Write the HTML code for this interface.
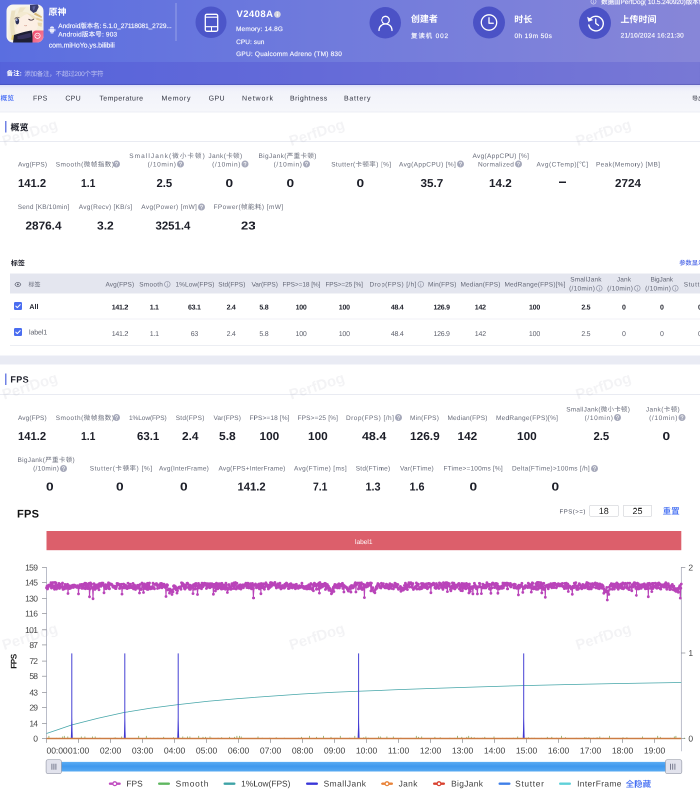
<!DOCTYPE html>
<html lang="en"><head><meta charset="utf-8"><title>PerfDog report</title>
<style>
html,body{margin:0;padding:0;background:#fff}
body{width:700px;height:795px;overflow:hidden;position:relative}
#r{position:absolute;left:0;top:0;width:1400px;height:1590px;transform:scale(.5);transform-origin:0 0;overflow:hidden;background:#fff;will-change:transform;text-rendering:geometricPrecision;
font-family:"Liberation Sans","Noto Sans CJK SC",sans-serif;}
.ab,#r>div{position:absolute;white-space:nowrap}
.md{font-weight:500}
</style></head><body>
<div id="r">
<div class="ab" style="left:0;top:0;width:1400px;height:125px;background:linear-gradient(90deg,#5a6ee0 0%,#6f7adc 45%,#8786d8 100%)"></div>
<div class="ab" style="left:0;top:124px;width:1400px;height:46px;background:linear-gradient(90deg,#5563db 0%,#646ad8 45%,#7878d5 100%);box-shadow:inset 0 -2px 1px rgba(40,44,130,.28)"></div>
<svg class="ab" style="left:13px;top:9px;width:74px;height:76px" viewBox="0 0 74 76">
<defs><clipPath id="ic"><rect x="0" y="0" width="74" height="76" rx="13"/></clipPath>
<linearGradient id="bg1" x1="0" y1="0" x2="1" y2="1"><stop offset="0" stop-color="#f0486a"/><stop offset="1" stop-color="#f58aa6"/></linearGradient></defs>
<g clip-path="url(#ic)">
<rect width="74" height="76" fill="#f8f5ee"/>
<path d="M4 70C2 40 6 14 24 6c14-5 30-2 40 8 8 8 10 24 8 40l-10 6-40 12z" fill="#f5efdc"/>
<path d="M10 12c-4 18-4 40 2 60l8-6c-6-18-6-36-2-54z" fill="#ebe1c2"/>
<path d="M27 6c-5 10-6 20-4 30 3-12 8-22 16-30z" fill="#ede3c6"/>
<path d="M17 30c2-8 10-13 22-13 12 0 22 6 24 16 2 12-4 22-14 26-8 3-18 3-25-2-6-5-9-16-7-27z" fill="#fcefe4"/>
<path d="M16 24c6-10 20-12 32-6-10 1-18 5-24 14-3 5-4 10-4 16-5-7-7-16-4-24z" fill="#f3ead0"/>
<path d="M40 18c8 0 16 4 20 10l-6 2c-4-5-8-9-14-12z" fill="#efe2bf"/>
<ellipse cx="21.6" cy="33.5" rx="3.7" ry="6.3" fill="#2a2f58"/>
<ellipse cx="20.5" cy="31" rx="1.5" ry="2.2" fill="#aab4e6"/>
<path d="M16.5 29c2-3.5 6-4.5 9-2.5" stroke="#4a3f48" stroke-width="1.3" fill="none" stroke-linecap="round"/>
<path d="M44.5 29.5c3 2.4 7 2.4 10-.3" stroke="#4a3a40" stroke-width="1.7" fill="none" stroke-linecap="round"/>
<path d="M36 42c1.5 1 3 1 4.5 0" stroke="#c78a7a" stroke-width="1.1" fill="none" stroke-linecap="round"/>
<path d="M47 1l15.5-1 2 5-4.5 9-6 3-7-6z" fill="#3b3d6a"/>
<path d="M52 4l6-1-2 7-3 2z" fill="#5a5f98"/>
<path d="M57 16l14 8-1 3-15-7z" fill="#d8b978"/><path d="M60 26l12 4v4l-13-4z" fill="#e6cf9c"/><path d="M62 36l9 1-1 8-7-3z" fill="#ead9ae"/>
<path d="M11 62c4-2 8-1 10 2l-4 8-8-2z" fill="#e9d47c"/>
<path d="M15 61c10-3 24-8 36-9l2 24H13z" fill="#1f1f33"/>
<path d="M22 63c8-1 18-5 26-6l1 8c-8 3-18 5-27 4z" fill="#35305a"/>
<path d="M52 59a7 7 0 0 1 7-7h15v24H52z" fill="url(#bg1)"/>
<circle cx="62" cy="62.5" r="5.3" fill="none" stroke="#fff" stroke-width="1.5"/>
<path d="M59.7 62.3h1.4M62.9 62.3h1.4" stroke="#fff" stroke-width="1.3" stroke-linecap="round"/>
</g></svg>
<div style="left:97.1px;top:13.3px;font-size:18px;line-height:23px;color:#fff;font-weight:bold;--cs:30;">原神</div>
<svg class="ab" style="left:97px;top:52px;width:14px;height:16px" viewBox="0 0 14 16">
<path d="M3 5.2h8v6.3a1 1 0 0 1-1 1H4a1 1 0 0 1-1-1z" fill="#e8eafb"/>
<path d="M3 4.4a4 3.6 0 0 1 8 0z" fill="#e8eafb"/>
<rect x="0.3" y="5.4" width="2" height="5.4" rx="1" fill="#e8eafb"/><rect x="11.7" y="5.4" width="2" height="5.4" rx="1" fill="#e8eafb"/>
<rect x="4.4" y="11.5" width="2" height="4" rx="1" fill="#e8eafb"/><rect x="7.6" y="11.5" width="2" height="4" rx="1" fill="#e8eafb"/>
</svg>
<div style="left:116.6px;top:43.3px;font-size:13px;line-height:17px;color:rgba(255,255,255,.92);letter-spacing:-0.13px;-webkit-text-stroke:.35px rgba(255,255,255,.85);--cs:22;">Android版本名: 5.1.0_27118081_2729...</div>
<div style="left:116.6px;top:60.3px;font-size:13px;line-height:17px;color:rgba(255,255,255,.92);letter-spacing:0.35px;-webkit-text-stroke:.35px rgba(255,255,255,.85);--cs:22;">Android版本号: 903</div>
<div style="left:97.4px;top:80.8px;font-size:14px;line-height:18px;color:rgba(255,255,255,.92);letter-spacing:-0.12px;-webkit-text-stroke:.35px rgba(255,255,255,.85);--cs:22;">com.miHoYo.ys.bilibili</div>
<div class="ab" style="left:351px;top:6px;width:2px;height:76px;background:rgba(255,255,255,.32)"></div>
<div class="ab" style="left:390.8px;top:13.4px;width:62.4px;height:62.4px;border-radius:50%;background:#4c56c9"></div>
<svg class="ab" style="left:408px;top:26px;width:30px;height:40px" viewBox="0 0 30 40">
<rect x="2.6" y="2.6" width="24.8" height="34" rx="3.2" fill="none" stroke="#fff" stroke-width="2.6"/>
<path d="M3 8.4h24M3 27.4h24" stroke="#fff" stroke-width="2.3"/>
<path d="M15 28v8" stroke="#fff" stroke-width="2"/></svg>
<div style="left:472.9px;top:15.7px;font-size:19px;line-height:25px;color:#fff;font-weight:bold;letter-spacing:0.87px;">V2408A</div>
<svg class="ab" style="left:548px;top:22px;width:13.5px;height:13.5px" viewBox="0 0 20 20"><circle cx="10" cy="10" r="10" fill="#d0d0e0"/>
<path d="M10 9v6" stroke="#fff" stroke-width="2.4" stroke-linecap="round"/><circle cx="10" cy="5.3" r="1.5" fill="#fff"/></svg>
<div style="left:471.9px;top:49.1px;font-size:13px;line-height:17px;color:rgba(255,255,255,.92);letter-spacing:0.37px;-webkit-text-stroke:.35px rgba(255,255,255,.85);--cs:22;">Memory: 14.8G</div>
<div style="left:472.3px;top:74.5px;font-size:13px;line-height:17px;color:rgba(255,255,255,.92);letter-spacing:0.12px;-webkit-text-stroke:.35px rgba(255,255,255,.85);--cs:22;">CPU: sun</div>
<div style="left:472.3px;top:98.9px;font-size:13px;line-height:17px;color:rgba(255,255,255,.92);letter-spacing:0.43px;-webkit-text-stroke:.35px rgba(255,255,255,.85);--cs:22;">GPU: Qualcomm Adreno (TM) 830</div>
<div class="ab" style="left:738.8px;top:13.6px;width:63.6px;height:63.6px;border-radius:50%;background:#4b52c6"></div>
<svg class="ab" style="left:754px;top:28px;width:34px;height:36px" viewBox="0 0 34 36">
<circle cx="17" cy="12.2" r="7.6" fill="none" stroke="#fff" stroke-width="2.6"/>
<path d="M4 33c0-8 5.5-13 13-13s13 5 13 13" fill="none" stroke="#fff" stroke-width="2.6" stroke-linecap="round"/></svg>
<div style="left:821.7px;top:27.3px;font-size:18px;line-height:23px;color:#fff;font-weight:bold;--cs:30;">创建者</div>
<div style="left:822px;top:62.7px;font-size:13px;line-height:17px;color:rgba(255,255,255,.92);letter-spacing:1.67px;-webkit-text-stroke:.35px rgba(255,255,255,.85);--cs:22;">复读机 002</div>
<div class="ab" style="left:945.8px;top:13px;width:64.4px;height:64.4px;border-radius:50%;background:#4b52c6"></div>
<svg class="ab" style="left:960px;top:27px;width:36px;height:36px" viewBox="0 0 36 36">
<circle cx="18" cy="18" r="15.4" fill="none" stroke="#fff" stroke-width="2.6"/>
<path d="M18 8.5v11h8.5" fill="none" stroke="#fff" stroke-width="2.6" stroke-linecap="round" stroke-linejoin="round"/></svg>
<div style="left:1028.5px;top:27.5px;font-size:18px;line-height:23px;color:#fff;font-weight:bold;--cs:30;">时长</div>
<div style="left:1028.9px;top:62.7px;font-size:13px;line-height:17px;color:rgba(255,255,255,.92);letter-spacing:0.78px;-webkit-text-stroke:.35px rgba(255,255,255,.85);--cs:22;">0h 19m 50s</div>
<div class="ab" style="left:1157.8px;top:14px;width:64.4px;height:64.4px;border-radius:50%;background:#4b52c6"></div>
<svg class="ab" style="left:1172px;top:28px;width:38px;height:36px" viewBox="0 0 38 36">
<path d="M7.5 11.5A14.6 14.6 0 1 1 5.6 22" fill="none" stroke="#fff" stroke-width="2.8" stroke-linecap="round"/>
<path d="M2.2 5.5l2.6 10 9.6-3.4z" fill="#fff"/>
<path d="M19.5 10v8.6l5.6 4.2" fill="none" stroke="#fff" stroke-width="2.6" stroke-linecap="round" stroke-linejoin="round"/></svg>
<div style="left:1241.1px;top:27.9px;font-size:18px;line-height:23px;color:#fff;font-weight:bold;--cs:30;">上传时间</div>
<div style="left:1241.3px;top:62.3px;font-size:13px;line-height:17px;color:rgba(255,255,255,.92);letter-spacing:0.39px;-webkit-text-stroke:.35px rgba(255,255,255,.85);--cs:22;">21/10/2024 16:21:30</div>
<svg class="ab" style="left:1181px;top:-3px;width:12px;height:12px" viewBox="0 0 20 20"><circle cx="10" cy="10" r="8.6" fill="none" stroke="rgba(255,255,255,.85)" stroke-width="1.8"/><path d="M10 9v5.5" stroke="rgba(255,255,255,.85)" stroke-width="2"/><circle cx="10" cy="5.8" r="1.2" fill="rgba(255,255,255,.85)"/></svg>
<div style="left:1202.3px;top:-5.1px;font-size:13px;line-height:17px;color:rgba(255,255,255,.92);letter-spacing:-0.09px;-webkit-text-stroke:.35px rgba(255,255,255,.85);--cs:22;">数据由PerfDog( 10.5.240920)版本创建</div>
<div style="left:13.3px;top:138.1px;font-size:13px;line-height:17px;color:#fff;font-weight:bold;">备注:</div>
<div style="left:48.4px;top:138.5px;font-size:13px;line-height:17px;color:rgba(255,255,255,.6);letter-spacing:-0.46px;">添加备注，不超过200个字符</div>
<div class="ab" style="left:0;top:170px;width:1400px;height:54px;background:linear-gradient(180deg,#dcdff8 0,#ecedfa 6px,#f2f3fa 14px,#f6f7fb 100%)"></div>
<div class="ab" style="left:0;top:223px;width:1400px;height:2px;background:#eceef5"></div>
<div style="left:1.1px;top:188px;font-size:13.5px;line-height:18px;color:#4068f5;"><span class="md">概览</span></div>
<div style="left:66.1px;top:187.4px;font-size:14px;line-height:18px;color:#30323f;letter-spacing:0.68px;">FPS</div>
<div style="left:130.7px;top:187.4px;font-size:14px;line-height:18px;color:#30323f;letter-spacing:0.52px;">CPU</div>
<div style="left:198.7px;top:187.4px;font-size:14px;line-height:18px;color:#30323f;letter-spacing:0.88px;">Temperature</div>
<div style="left:322.9px;top:187.4px;font-size:14px;line-height:18px;color:#30323f;letter-spacing:1.52px;">Memory</div>
<div style="left:417.3px;top:187.4px;font-size:14px;line-height:18px;color:#30323f;letter-spacing:0.72px;">GPU</div>
<div style="left:483.9px;top:187.4px;font-size:14px;line-height:18px;color:#30323f;letter-spacing:1.8px;">Network</div>
<div style="left:579.9px;top:187.4px;font-size:14px;line-height:18px;color:#30323f;letter-spacing:0.95px;">Brightness</div>
<div style="left:687.9px;top:187.4px;font-size:14px;line-height:18px;color:#30323f;letter-spacing:1.47px;">Battery</div>
<div style="left:1384px;top:189.2px;font-size:12px;line-height:16px;color:#30323f;">导出</div>
<div class="ab" style="left:0;top:711px;width:1400px;height:18px;background:#e9ebf4"></div>
<div class="ab" style="left:9.6px;top:241.8px;width:3.4px;height:23px;background:#7182e4"></div>
<div style="left:21.1px;top:243.7px;font-size:18px;line-height:23px;color:#1d1f2a;font-weight:bold;">概览</div>
<div class="ab" style="left:0;top:282.2px;width:1400px;height:2px;background:#e9ebf2"></div>
<div class="ab" style="left:9.6px;top:747.4px;width:3.4px;height:23px;background:#7182e4"></div>
<div style="left:20.8px;top:748.1px;font-size:18px;line-height:23px;color:#1d1f2a;font-weight:bold;letter-spacing:0.75px;">FPS</div>
<div class="ab" style="left:0;top:787.8px;width:1400px;height:2px;background:#e9ebf2"></div>
<div class="ab" style="left:10px;top:268px;font-size:29.5px;line-height:30px;font-weight:bold;color:rgba(150,152,165,.115);transform:rotate(-18deg);transform-origin:0 100%">PerfDog</div>
<div class="ab" style="left:584px;top:268px;font-size:29.5px;line-height:30px;font-weight:bold;color:rgba(150,152,165,.115);transform:rotate(-18deg);transform-origin:0 100%">PerfDog</div>
<div class="ab" style="left:1157px;top:268px;font-size:29.5px;line-height:30px;font-weight:bold;color:rgba(150,152,165,.115);transform:rotate(-18deg);transform-origin:0 100%">PerfDog</div>
<div class="ab" style="left:10px;top:775px;font-size:29.5px;line-height:30px;font-weight:bold;color:rgba(150,152,165,.115);transform:rotate(-18deg);transform-origin:0 100%">PerfDog</div>
<div class="ab" style="left:584px;top:775px;font-size:29.5px;line-height:30px;font-weight:bold;color:rgba(150,152,165,.115);transform:rotate(-18deg);transform-origin:0 100%">PerfDog</div>
<div class="ab" style="left:1157px;top:775px;font-size:29.5px;line-height:30px;font-weight:bold;color:rgba(150,152,165,.115);transform:rotate(-18deg);transform-origin:0 100%">PerfDog</div>
<div class="ab" style="left:10px;top:1276px;font-size:29.5px;line-height:30px;font-weight:bold;color:rgba(150,152,165,.115);transform:rotate(-18deg);transform-origin:0 100%">PerfDog</div>
<div class="ab" style="left:584px;top:1276px;font-size:29.5px;line-height:30px;font-weight:bold;color:rgba(150,152,165,.115);transform:rotate(-18deg);transform-origin:0 100%">PerfDog</div>
<div class="ab" style="left:1157px;top:1276px;font-size:29.5px;line-height:30px;font-weight:bold;color:rgba(150,152,165,.115);transform:rotate(-18deg);transform-origin:0 100%">PerfDog</div>
<div style="left:36px;top:319.7px;font-size:13px;line-height:17px;color:#696d7b;letter-spacing:0.27px;">Avg(FPS)</div>
<div style="left:36.2px;top:350.6px;font-size:23px;line-height:30px;color:#1c1e28;font-weight:bold;transform:scaleX(0.978);transform-origin:0 50%;">141.2</div>
<div style="left:111.4px;top:319.7px;font-size:13px;line-height:17px;color:#696d7b;letter-spacing:0.99px;">Smooth(微帧指数)</div>
<svg class="ab" style="left:226.4px;top:321.4px;width:14px;height:14px" viewBox="0 0 20 20"><circle cx="10" cy="10" r="10" fill="#a6a9ba"/><path d="M7 7.8C7 5.9 8.3 4.9 10 4.9s3 1 3 2.6c0 2.3-2.9 2.4-2.9 4.6" fill="none" stroke="#fff" stroke-width="1.9" stroke-linecap="round"/><circle cx="10.1" cy="15" r="1.25" fill="#fff"/></svg>
<div style="left:161.6px;top:350.6px;font-size:23px;line-height:30px;color:#1c1e28;font-weight:bold;transform:scaleX(0.9);transform-origin:0 50%;">1.1</div>
<div style="left:258.4px;top:302.9px;font-size:13px;line-height:17px;color:#696d7b;letter-spacing:2.18px;">SmallJank(微小卡顿)</div>
<div style="left:295.2px;top:319.7px;font-size:13px;line-height:17px;color:#696d7b;letter-spacing:1.28px;">(/10min)</div>
<svg class="ab" style="left:354.4px;top:321.4px;width:14px;height:14px" viewBox="0 0 20 20"><circle cx="10" cy="10" r="10" fill="#a6a9ba"/><path d="M7 7.8C7 5.9 8.3 4.9 10 4.9s3 1 3 2.6c0 2.3-2.9 2.4-2.9 4.6" fill="none" stroke="#fff" stroke-width="1.9" stroke-linecap="round"/><circle cx="10.1" cy="15" r="1.25" fill="#fff"/></svg>
<div style="left:313.4px;top:350.6px;font-size:23px;line-height:30px;color:#1c1e28;font-weight:bold;transform:scaleX(0.982);transform-origin:0 50%;">2.5</div>
<div style="left:416.8px;top:302.9px;font-size:13px;line-height:17px;color:#696d7b;letter-spacing:0.78px;">Jank(卡顿)</div>
<div style="left:424.2px;top:319.7px;font-size:13px;line-height:17px;color:#696d7b;letter-spacing:1.28px;">(/10min)</div>
<svg class="ab" style="left:483.4px;top:321.4px;width:14px;height:14px" viewBox="0 0 20 20"><circle cx="10" cy="10" r="10" fill="#a6a9ba"/><path d="M7 7.8C7 5.9 8.3 4.9 10 4.9s3 1 3 2.6c0 2.3-2.9 2.4-2.9 4.6" fill="none" stroke="#fff" stroke-width="1.9" stroke-linecap="round"/><circle cx="10.1" cy="15" r="1.25" fill="#fff"/></svg>
<div style="left:450.8px;top:350.6px;font-size:23px;line-height:30px;color:#1c1e28;font-weight:bold;transform:scaleX(1.188);transform-origin:0 50%;">0</div>
<div style="left:516.9px;top:302.9px;font-size:13px;line-height:17px;color:#696d7b;letter-spacing:0.75px;">BigJank(严重卡顿)</div>
<div style="left:547.2px;top:319.7px;font-size:13px;line-height:17px;color:#696d7b;letter-spacing:1.28px;">(/10min)</div>
<svg class="ab" style="left:606.4px;top:321.4px;width:14px;height:14px" viewBox="0 0 20 20"><circle cx="10" cy="10" r="10" fill="#a6a9ba"/><path d="M7 7.8C7 5.9 8.3 4.9 10 4.9s3 1 3 2.6c0 2.3-2.9 2.4-2.9 4.6" fill="none" stroke="#fff" stroke-width="1.9" stroke-linecap="round"/><circle cx="10.1" cy="15" r="1.25" fill="#fff"/></svg>
<div style="left:573.4px;top:350.6px;font-size:23px;line-height:30px;color:#1c1e28;font-weight:bold;transform:scaleX(1.188);transform-origin:0 50%;">0</div>
<div style="left:662.4px;top:319.7px;font-size:13px;line-height:17px;color:#696d7b;letter-spacing:0.76px;">Stutter(卡顿率) [%]</div>
<div style="left:713.4px;top:350.6px;font-size:23px;line-height:30px;color:#1c1e28;font-weight:bold;transform:scaleX(1.188);transform-origin:0 50%;">0</div>
<div style="left:798px;top:319.7px;font-size:13px;line-height:17px;color:#696d7b;letter-spacing:0.71px;">Avg(AppCPU) [%]</div>
<svg class="ab" style="left:914.4px;top:321.4px;width:14px;height:14px" viewBox="0 0 20 20"><circle cx="10" cy="10" r="10" fill="#a6a9ba"/><path d="M7 7.8C7 5.9 8.3 4.9 10 4.9s3 1 3 2.6c0 2.3-2.9 2.4-2.9 4.6" fill="none" stroke="#fff" stroke-width="1.9" stroke-linecap="round"/><circle cx="10.1" cy="15" r="1.25" fill="#fff"/></svg>
<div style="left:840.5px;top:350.6px;font-size:23px;line-height:30px;color:#1c1e28;font-weight:bold;transform:scaleX(1.018);transform-origin:0 50%;">35.7</div>
<div style="left:945px;top:302.9px;font-size:13px;line-height:17px;color:#696d7b;letter-spacing:0.64px;">Avg(AppCPU) [%]</div>
<div style="left:955.9px;top:319.7px;font-size:13px;line-height:17px;color:#696d7b;letter-spacing:0.68px;">Normalized</div>
<svg class="ab" style="left:1030.4px;top:321.4px;width:14px;height:14px" viewBox="0 0 20 20"><circle cx="10" cy="10" r="10" fill="#a6a9ba"/><path d="M7 7.8C7 5.9 8.3 4.9 10 4.9s3 1 3 2.6c0 2.3-2.9 2.4-2.9 4.6" fill="none" stroke="#fff" stroke-width="1.9" stroke-linecap="round"/><circle cx="10.1" cy="15" r="1.25" fill="#fff"/></svg>
<div style="left:977.6px;top:350.6px;font-size:23px;line-height:30px;color:#1c1e28;font-weight:bold;transform:scaleX(1.014);transform-origin:0 50%;">14.2</div>
<div style="left:1073px;top:319.7px;font-size:13px;line-height:17px;color:#696d7b;letter-spacing:0.91px;">Avg(CTemp)[℃]</div>
<div class="ab" style="left:1118px;top:363px;width:14px;height:3.4px;background:#1c1e28"></div>
<div style="left:1191.9px;top:319.7px;font-size:13px;line-height:17px;color:#696d7b;letter-spacing:0.78px;">Peak(Memory) [MB]</div>
<div style="left:1229.7px;top:350.6px;font-size:23px;line-height:30px;color:#1c1e28;font-weight:bold;transform:scaleX(1.015);transform-origin:0 50%;">2724</div>
<div style="left:35.4px;top:405.1px;font-size:13px;line-height:17px;color:#696d7b;letter-spacing:0.4px;">Send [KB/10min]</div>
<div style="left:50.7px;top:436px;font-size:23px;line-height:30px;color:#1c1e28;font-weight:bold;transform:scaleX(1.023);transform-origin:0 50%;">2876.4</div>
<div style="left:157.6px;top:405.1px;font-size:13px;line-height:17px;color:#696d7b;letter-spacing:0.53px;">Avg(Recv) [KB/s]</div>
<div style="left:193.8px;top:436px;font-size:23px;line-height:30px;color:#1c1e28;font-weight:bold;transform:scaleX(1.048);transform-origin:0 50%;">3.2</div>
<div style="left:282.6px;top:405.1px;font-size:13px;line-height:17px;color:#696d7b;letter-spacing:0.68px;">Avg(Power) [mW]</div>
<svg class="ab" style="left:396.4px;top:406.8px;width:14px;height:14px" viewBox="0 0 20 20"><circle cx="10" cy="10" r="10" fill="#a6a9ba"/><path d="M7 7.8C7 5.9 8.3 4.9 10 4.9s3 1 3 2.6c0 2.3-2.9 2.4-2.9 4.6" fill="none" stroke="#fff" stroke-width="1.9" stroke-linecap="round"/><circle cx="10.1" cy="15" r="1.25" fill="#fff"/></svg>
<div style="left:311.4px;top:436px;font-size:23px;line-height:30px;color:#1c1e28;font-weight:bold;transform:scaleX(0.99);transform-origin:0 50%;">3251.4</div>
<div style="left:426.9px;top:405.1px;font-size:13px;line-height:17px;color:#696d7b;letter-spacing:0.88px;">FPower(帧能耗) [mW]</div>
<div style="left:481.6px;top:436px;font-size:23px;line-height:30px;color:#1c1e28;font-weight:bold;transform:scaleX(1.127);transform-origin:0 50%;">23</div>
<div style="left:21.7px;top:517.4px;font-size:14px;line-height:18px;color:#1d1f2a;font-weight:bold;">标签</div>
<div style="left:1358.4px;top:518.2px;font-size:12.6px;line-height:16px;color:#4863e6;"><span class="md">参数显示</span></div>
<div class="ab" style="left:20px;top:547px;width:1380px;height:40px;background:#e4e6ef"></div>
<div class="ab" style="left:20px;top:637px;width:1380px;height:2px;background:#f0f1f6"></div>
<div class="ab" style="left:20px;top:690px;width:1380px;height:2px;background:#eceef3"></div>
<svg class="ab" style="left:29px;top:563px;width:13.5px;height:11.8px" viewBox="0 0 16 14"><path d="M1 7C2.8 3.6 5.2 2 8 2s5.2 1.6 7 5c-1.8 3.4-4.2 5-7 5S2.8 10.4 1 7z" fill="none" stroke="#5a5e6e" stroke-width="1.5"/><circle cx="8" cy="7" r="2.2" fill="#5a5e6e"/></svg>
<div style="left:57px;top:560.8px;font-size:12px;line-height:16px;color:#646877;">标签</div>
<svg class="ab" style="left:28.4px;top:604.4px;width:16px;height:16px" viewBox="0 0 16 16"><rect width="16" height="16" rx="2.5" fill="#4a6df0"/><path d="M3.6 8.2l3 3 5.8-6" fill="none" stroke="#fff" stroke-width="2" stroke-linecap="round" stroke-linejoin="round"/></svg>
<svg class="ab" style="left:28.4px;top:656px;width:16px;height:16px" viewBox="0 0 16 16"><rect width="16" height="16" rx="2.5" fill="#4a6df0"/><path d="M3.6 8.2l3 3 5.8-6" fill="none" stroke="#fff" stroke-width="2" stroke-linecap="round" stroke-linejoin="round"/></svg>
<div style="left:58.7px;top:604.2px;font-size:14px;line-height:18px;color:#22242e;font-weight:bold;letter-spacing:0.13px;">All</div>
<div style="left:58.1px;top:655.2px;font-size:14px;line-height:18px;color:#5d606c;letter-spacing:-0.23px;">label1</div>
<div style="left:211px;top:559.9px;font-size:13px;line-height:17px;color:#646877;letter-spacing:0.16px;">Avg(FPS)</div>
<div style="left:223.4px;top:604.8px;font-size:14px;line-height:18px;color:#22242e;font-weight:bold;letter-spacing:-0.53px;">141.2</div>
<div style="left:223.4px;top:657.8px;font-size:14px;line-height:18px;color:#5d606c;letter-spacing:-0.53px;">141.2</div>
<div style="left:278.4px;top:559.9px;font-size:13px;line-height:17px;color:#646877;letter-spacing:0.53px;">Smooth</div>
<svg class="ab" style="left:327.6px;top:562px;width:13.2px;height:13.2px" viewBox="0 0 20 20"><circle cx="10" cy="10" r="8.6" fill="none" stroke="#8d91a3" stroke-width="2"/><path d="M10 9v5.5" stroke="#8d91a3" stroke-width="1.8" stroke-linecap="round"/><circle cx="10" cy="5.8" r="1.2" fill="#8d91a3"/></svg>
<div style="left:299.5px;top:604.8px;font-size:14px;line-height:18px;color:#22242e;font-weight:bold;letter-spacing:-0.53px;">1.1</div>
<div style="left:299.6px;top:657.8px;font-size:14px;line-height:18px;color:#5d606c;letter-spacing:-0.53px;">1.1</div>
<div style="left:351px;top:559.9px;font-size:13px;line-height:17px;color:#646877;letter-spacing:0.14px;">1%Low(FPS)</div>
<div style="left:376.1px;top:604.8px;font-size:14px;line-height:18px;color:#22242e;font-weight:bold;letter-spacing:-0.53px;">63.1</div>
<div style="left:381.4px;top:657.8px;font-size:14px;line-height:18px;color:#5d606c;letter-spacing:-0.53px;">63</div>
<div style="left:436.4px;top:559.9px;font-size:13px;line-height:17px;color:#646877;letter-spacing:0.13px;">Std(FPS)</div>
<div style="left:453.2px;top:604.8px;font-size:14px;line-height:18px;color:#22242e;font-weight:bold;letter-spacing:-0.53px;">2.4</div>
<div style="left:453.2px;top:657.8px;font-size:14px;line-height:18px;color:#5d606c;letter-spacing:-0.53px;">2.4</div>
<div style="left:502.9px;top:559.9px;font-size:13px;line-height:17px;color:#646877;letter-spacing:-0.04px;">Var(FPS)</div>
<div style="left:518.8px;top:604.8px;font-size:14px;line-height:18px;color:#22242e;font-weight:bold;letter-spacing:-0.53px;">5.8</div>
<div style="left:518.8px;top:657.8px;font-size:14px;line-height:18px;color:#5d606c;letter-spacing:-0.53px;">5.8</div>
<div style="left:564.9px;top:559.9px;font-size:13px;line-height:17px;color:#646877;letter-spacing:-0.13px;">FPS&gt;=18 [%]</div>
<div style="left:591.2px;top:604.8px;font-size:14px;line-height:18px;color:#22242e;font-weight:bold;letter-spacing:-0.45px;">100</div>
<div style="left:591px;top:657.8px;font-size:14px;line-height:18px;color:#5d606c;letter-spacing:-0.37px;">100</div>
<div style="left:650.9px;top:559.9px;font-size:13px;line-height:17px;color:#646877;letter-spacing:-0.23px;">FPS&gt;=25 [%]</div>
<div style="left:677.6px;top:604.8px;font-size:14px;line-height:18px;color:#22242e;font-weight:bold;letter-spacing:-0.45px;">100</div>
<div style="left:677.4px;top:657.8px;font-size:14px;line-height:18px;color:#5d606c;letter-spacing:-0.37px;">100</div>
<div style="left:738.9px;top:559.9px;font-size:13px;line-height:17px;color:#646877;letter-spacing:0.78px;">Drop(FPS) [/h]</div>
<svg class="ab" style="left:834.6px;top:562px;width:13.2px;height:13.2px" viewBox="0 0 20 20"><circle cx="10" cy="10" r="8.6" fill="none" stroke="#8d91a3" stroke-width="2"/><path d="M10 9v5.5" stroke="#8d91a3" stroke-width="1.8" stroke-linecap="round"/><circle cx="10" cy="5.8" r="1.2" fill="#8d91a3"/></svg>
<div style="left:781.7px;top:604.8px;font-size:14px;line-height:18px;color:#22242e;font-weight:bold;letter-spacing:-0.53px;">48.4</div>
<div style="left:781.8px;top:657.8px;font-size:14px;line-height:18px;color:#5d606c;letter-spacing:-0.51px;">48.4</div>
<div style="left:855.9px;top:559.9px;font-size:13px;line-height:17px;color:#646877;letter-spacing:0.28px;">Min(FPS)</div>
<div style="left:867px;top:604.8px;font-size:14px;line-height:18px;color:#22242e;font-weight:bold;letter-spacing:-0.53px;">126.9</div>
<div style="left:866.9px;top:657.8px;font-size:14px;line-height:18px;color:#5d606c;letter-spacing:-0.53px;">126.9</div>
<div style="left:920.9px;top:559.9px;font-size:13px;line-height:17px;color:#646877;letter-spacing:0.33px;">Median(FPS)</div>
<div style="left:949.6px;top:604.8px;font-size:14px;line-height:18px;color:#22242e;font-weight:bold;letter-spacing:-0.46px;">142</div>
<div style="left:949.4px;top:657.8px;font-size:14px;line-height:18px;color:#5d606c;letter-spacing:-0.29px;">142</div>
<div style="left:1008.9px;top:559.9px;font-size:13px;line-height:17px;color:#646877;letter-spacing:0.38px;">MedRange(FPS)[%]</div>
<div style="left:1058px;top:604.8px;font-size:14px;line-height:18px;color:#22242e;font-weight:bold;letter-spacing:-0.45px;">100</div>
<div style="left:1057.8px;top:657.8px;font-size:14px;line-height:18px;color:#5d606c;letter-spacing:-0.37px;">100</div>
<div style="left:1140.4px;top:549.9px;font-size:13px;line-height:17px;color:#646877;letter-spacing:0.33px;">SmallJank</div>
<div style="left:1138.2px;top:567.5px;font-size:13px;line-height:17px;color:#646877;letter-spacing:0.56px;">(/10min)</div>
<svg class="ab" style="left:1191.6px;top:569.6px;width:13.2px;height:13.2px" viewBox="0 0 20 20"><circle cx="10" cy="10" r="8.6" fill="none" stroke="#8d91a3" stroke-width="2"/><path d="M10 9v5.5" stroke="#8d91a3" stroke-width="1.8" stroke-linecap="round"/><circle cx="10" cy="5.8" r="1.2" fill="#8d91a3"/></svg>
<div style="left:1162.7px;top:604.8px;font-size:14px;line-height:18px;color:#22242e;font-weight:bold;letter-spacing:-0.53px;">2.5</div>
<div style="left:1162.7px;top:657.8px;font-size:14px;line-height:18px;color:#5d606c;letter-spacing:-0.53px;">2.5</div>
<div style="left:1233.8px;top:549.9px;font-size:13px;line-height:17px;color:#646877;letter-spacing:0.24px;">Jank</div>
<div style="left:1214.2px;top:567.5px;font-size:13px;line-height:17px;color:#646877;letter-spacing:0.56px;">(/10min)</div>
<svg class="ab" style="left:1267.6px;top:569.6px;width:13.2px;height:13.2px" viewBox="0 0 20 20"><circle cx="10" cy="10" r="8.6" fill="none" stroke="#8d91a3" stroke-width="2"/><path d="M10 9v5.5" stroke="#8d91a3" stroke-width="1.8" stroke-linecap="round"/><circle cx="10" cy="5.8" r="1.2" fill="#8d91a3"/></svg>
<div style="left:1243.9px;top:604.8px;font-size:14px;line-height:18px;color:#22242e;font-weight:bold;">0</div>
<div style="left:1244px;top:657.8px;font-size:14px;line-height:18px;color:#5d606c;">0</div>
<div style="left:1300.9px;top:549.9px;font-size:13px;line-height:17px;color:#646877;letter-spacing:-0.2px;">BigJank</div>
<div style="left:1290.2px;top:567.5px;font-size:13px;line-height:17px;color:#646877;letter-spacing:0.56px;">(/10min)</div>
<svg class="ab" style="left:1343.6px;top:569.6px;width:13.2px;height:13.2px" viewBox="0 0 20 20"><circle cx="10" cy="10" r="8.6" fill="none" stroke="#8d91a3" stroke-width="2"/><path d="M10 9v5.5" stroke="#8d91a3" stroke-width="1.8" stroke-linecap="round"/><circle cx="10" cy="5.8" r="1.2" fill="#8d91a3"/></svg>
<div style="left:1319.9px;top:604.8px;font-size:14px;line-height:18px;color:#22242e;font-weight:bold;">0</div>
<div style="left:1320px;top:657.8px;font-size:14px;line-height:18px;color:#5d606c;">0</div>
<div style="left:1367.4px;top:559.9px;font-size:13px;line-height:17px;color:#646877;letter-spacing:1.09px;">Stutter</div>
<div style="left:1395.9px;top:604.8px;font-size:14px;line-height:18px;color:#22242e;font-weight:bold;">0</div>
<div style="left:1396px;top:657.8px;font-size:14px;line-height:18px;color:#5d606c;">0</div>
<div style="left:36px;top:826.7px;font-size:13px;line-height:17px;color:#696d7b;letter-spacing:0.16px;">Avg(FPS)</div>
<div style="left:36.2px;top:857.4px;font-size:23px;line-height:30px;color:#1c1e28;font-weight:bold;transform:scaleX(0.978);transform-origin:0 50%;">141.2</div>
<div style="left:111.4px;top:826.7px;font-size:13px;line-height:17px;color:#696d7b;letter-spacing:0.99px;">Smooth(微帧指数)</div>
<svg class="ab" style="left:226.4px;top:828.4px;width:14px;height:14px" viewBox="0 0 20 20"><circle cx="10" cy="10" r="10" fill="#a6a9ba"/><path d="M7 7.8C7 5.9 8.3 4.9 10 4.9s3 1 3 2.6c0 2.3-2.9 2.4-2.9 4.6" fill="none" stroke="#fff" stroke-width="1.9" stroke-linecap="round"/><circle cx="10.1" cy="15" r="1.25" fill="#fff"/></svg>
<div style="left:161.8px;top:857.4px;font-size:23px;line-height:30px;color:#1c1e28;font-weight:bold;transform:scaleX(0.9);transform-origin:0 50%;">1.1</div>
<div style="left:258px;top:826.7px;font-size:13px;line-height:17px;color:#696d7b;letter-spacing:-0.15px;">1%Low(FPS)</div>
<div style="left:273.7px;top:857.4px;font-size:23px;line-height:30px;color:#1c1e28;font-weight:bold;transform:scaleX(0.993);transform-origin:0 50%;">63.1</div>
<div style="left:351.4px;top:826.7px;font-size:13px;line-height:17px;color:#696d7b;letter-spacing:0.56px;">Std(FPS)</div>
<div style="left:363.8px;top:857.4px;font-size:23px;line-height:30px;color:#1c1e28;font-weight:bold;transform:scaleX(1.031);transform-origin:0 50%;">2.4</div>
<div style="left:426.9px;top:826.7px;font-size:13px;line-height:17px;color:#696d7b;letter-spacing:0.24px;">Var(FPS)</div>
<div style="left:437.7px;top:857.4px;font-size:23px;line-height:30px;color:#1c1e28;font-weight:bold;transform:scaleX(1.047);transform-origin:0 50%;">5.8</div>
<div style="left:498.9px;top:826.7px;font-size:13px;line-height:17px;color:#696d7b;letter-spacing:0.27px;">FPS&gt;=18 [%]</div>
<div style="left:519px;top:857.4px;font-size:23px;line-height:30px;color:#1c1e28;font-weight:bold;transform:scaleX(1.028);transform-origin:0 50%;">100</div>
<div style="left:594.9px;top:826.7px;font-size:13px;line-height:17px;color:#696d7b;letter-spacing:0.37px;">FPS&gt;=25 [%]</div>
<div style="left:616px;top:857.4px;font-size:23px;line-height:30px;color:#1c1e28;font-weight:bold;transform:scaleX(1.028);transform-origin:0 50%;">100</div>
<div style="left:691.9px;top:826.7px;font-size:13px;line-height:17px;color:#696d7b;letter-spacing:0.94px;">Drop(FPS) [/h]</div>
<svg class="ab" style="left:790.4px;top:828.4px;width:14px;height:14px" viewBox="0 0 20 20"><circle cx="10" cy="10" r="10" fill="#a6a9ba"/><path d="M7 7.8C7 5.9 8.3 4.9 10 4.9s3 1 3 2.6c0 2.3-2.9 2.4-2.9 4.6" fill="none" stroke="#fff" stroke-width="1.9" stroke-linecap="round"/><circle cx="10.1" cy="15" r="1.25" fill="#fff"/></svg>
<div style="left:723.6px;top:857.4px;font-size:23px;line-height:30px;color:#1c1e28;font-weight:bold;transform:scaleX(1.084);transform-origin:0 50%;">48.4</div>
<div style="left:819.9px;top:826.7px;font-size:13px;line-height:17px;color:#696d7b;letter-spacing:0.43px;">Min(FPS)</div>
<div style="left:819.6px;top:857.4px;font-size:23px;line-height:30px;color:#1c1e28;font-weight:bold;transform:scaleX(1.032);transform-origin:0 50%;">126.9</div>
<div style="left:894.9px;top:826.7px;font-size:13px;line-height:17px;color:#696d7b;letter-spacing:0.33px;">Median(FPS)</div>
<div style="left:915px;top:857.4px;font-size:23px;line-height:30px;color:#1c1e28;font-weight:bold;transform:scaleX(1.028);transform-origin:0 50%;">142</div>
<div style="left:991.9px;top:826.7px;font-size:13px;line-height:17px;color:#696d7b;letter-spacing:0.51px;">MedRange(FPS)[%]</div>
<div style="left:1034px;top:857.4px;font-size:23px;line-height:30px;color:#1c1e28;font-weight:bold;transform:scaleX(1.028);transform-origin:0 50%;">100</div>
<div style="left:1132.4px;top:809.9px;font-size:13px;line-height:17px;color:#696d7b;letter-spacing:0.48px;">SmallJank(微小卡顿)</div>
<div style="left:1169.2px;top:826.7px;font-size:13px;line-height:17px;color:#696d7b;letter-spacing:1.28px;">(/10min)</div>
<svg class="ab" style="left:1228.4px;top:828.4px;width:14px;height:14px" viewBox="0 0 20 20"><circle cx="10" cy="10" r="10" fill="#a6a9ba"/><path d="M7 7.8C7 5.9 8.3 4.9 10 4.9s3 1 3 2.6c0 2.3-2.9 2.4-2.9 4.6" fill="none" stroke="#fff" stroke-width="1.9" stroke-linecap="round"/><circle cx="10.1" cy="15" r="1.25" fill="#fff"/></svg>
<div style="left:1187.2px;top:857.4px;font-size:23px;line-height:30px;color:#1c1e28;font-weight:bold;transform:scaleX(0.982);transform-origin:0 50%;">2.5</div>
<div style="left:1291.8px;top:809.9px;font-size:13px;line-height:17px;color:#696d7b;letter-spacing:0.78px;">Jank(卡顿)</div>
<div style="left:1298.2px;top:826.7px;font-size:13px;line-height:17px;color:#696d7b;letter-spacing:1.28px;">(/10min)</div>
<svg class="ab" style="left:1357.4px;top:828.4px;width:14px;height:14px" viewBox="0 0 20 20"><circle cx="10" cy="10" r="10" fill="#a6a9ba"/><path d="M7 7.8C7 5.9 8.3 4.9 10 4.9s3 1 3 2.6c0 2.3-2.9 2.4-2.9 4.6" fill="none" stroke="#fff" stroke-width="1.9" stroke-linecap="round"/><circle cx="10.1" cy="15" r="1.25" fill="#fff"/></svg>
<div style="left:1325px;top:857.4px;font-size:23px;line-height:30px;color:#1c1e28;font-weight:bold;transform:scaleX(1.188);transform-origin:0 50%;">0</div>
<div style="left:34.9px;top:911.3px;font-size:13px;line-height:17px;color:#696d7b;letter-spacing:0.62px;">BigJank(严重卡顿)</div>
<div style="left:66.2px;top:928.1px;font-size:13px;line-height:17px;color:#696d7b;letter-spacing:0.56px;">(/10min)</div>
<svg class="ab" style="left:120.4px;top:929.8px;width:14px;height:14px" viewBox="0 0 20 20"><circle cx="10" cy="10" r="10" fill="#a6a9ba"/><path d="M7 7.8C7 5.9 8.3 4.9 10 4.9s3 1 3 2.6c0 2.3-2.9 2.4-2.9 4.6" fill="none" stroke="#fff" stroke-width="1.9" stroke-linecap="round"/><circle cx="10.1" cy="15" r="1.25" fill="#fff"/></svg>
<div style="left:91.6px;top:958.2px;font-size:23px;line-height:30px;color:#1c1e28;font-weight:bold;transform:scaleX(1.188);transform-origin:0 50%;">0</div>
<div style="left:179.4px;top:928.1px;font-size:13px;line-height:17px;color:#696d7b;letter-spacing:1.1px;">Stutter(卡顿率) [%]</div>
<div style="left:231.8px;top:958.2px;font-size:23px;line-height:30px;color:#1c1e28;font-weight:bold;transform:scaleX(1.188);transform-origin:0 50%;">0</div>
<div style="left:318px;top:928.1px;font-size:13px;line-height:17px;color:#696d7b;letter-spacing:0.37px;">Avg(InterFrame)</div>
<div style="left:359.6px;top:958.2px;font-size:23px;line-height:30px;color:#1c1e28;font-weight:bold;transform:scaleX(1.188);transform-origin:0 50%;">0</div>
<div style="left:437px;top:928.1px;font-size:13px;line-height:17px;color:#696d7b;letter-spacing:0.35px;">Avg(FPS+InterFrame)</div>
<div style="left:474.8px;top:958.2px;font-size:23px;line-height:30px;color:#1c1e28;font-weight:bold;transform:scaleX(0.978);transform-origin:0 50%;">141.2</div>
<div style="left:588px;top:928.1px;font-size:13px;line-height:17px;color:#696d7b;letter-spacing:0.71px;">Avg(FTime) [ms]</div>
<div style="left:625.7px;top:958.2px;font-size:23px;line-height:30px;color:#1c1e28;font-weight:bold;transform:scaleX(0.9);transform-origin:0 50%;">7.1</div>
<div style="left:711.4px;top:928.1px;font-size:13px;line-height:17px;color:#696d7b;letter-spacing:0.49px;">Std(FTime)</div>
<div style="left:730.6px;top:958.2px;font-size:23px;line-height:30px;color:#1c1e28;font-weight:bold;transform:scaleX(0.943);transform-origin:0 50%;">1.3</div>
<div style="left:799.9px;top:928.1px;font-size:13px;line-height:17px;color:#696d7b;letter-spacing:0.35px;">Var(FTime)</div>
<div style="left:819.2px;top:958.2px;font-size:23px;line-height:30px;color:#1c1e28;font-weight:bold;transform:scaleX(0.943);transform-origin:0 50%;">1.6</div>
<div style="left:886.9px;top:928.1px;font-size:13px;line-height:17px;color:#696d7b;letter-spacing:0.37px;">FTime&gt;=100ms [%]</div>
<div style="left:939.2px;top:958.2px;font-size:23px;line-height:30px;color:#1c1e28;font-weight:bold;transform:scaleX(1.188);transform-origin:0 50%;">0</div>
<div style="left:1023.9px;top:928.1px;font-size:13px;line-height:17px;color:#696d7b;letter-spacing:0.54px;">Delta(FTime)&gt;100ms [/h]</div>
<svg class="ab" style="left:1182.4px;top:929.8px;width:14px;height:14px" viewBox="0 0 20 20"><circle cx="10" cy="10" r="10" fill="#a6a9ba"/><path d="M7 7.8C7 5.9 8.3 4.9 10 4.9s3 1 3 2.6c0 2.3-2.9 2.4-2.9 4.6" fill="none" stroke="#fff" stroke-width="1.9" stroke-linecap="round"/><circle cx="10.1" cy="15" r="1.25" fill="#fff"/></svg>
<div style="left:1103px;top:958.2px;font-size:23px;line-height:30px;color:#1c1e28;font-weight:bold;transform:scaleX(1.188);transform-origin:0 50%;">0</div>
<div style="left:33.9px;top:1013.3px;font-size:22px;line-height:29px;color:#111;font-weight:bold;letter-spacing:0.67px;">FPS</div>
<div style="left:1119px;top:1015.4px;font-size:12px;line-height:16px;color:#4a4e5e;letter-spacing:1.06px;">FPS(&gt;=)</div>
<div class="ab" style="left:1178.6px;top:1010.4px;width:58px;height:22.4px;border:1.5px solid #c4c6cc;box-sizing:border-box;border-radius:2px;background:#fff"></div>
<div style="left:1197.5px;top:1010.5px;font-size:18px;line-height:23px;color:#222;">18</div>
<div class="ab" style="left:1245.8px;top:1010.4px;width:58px;height:22.4px;border:1.5px solid #c4c6cc;box-sizing:border-box;border-radius:2px;background:#fff"></div>
<div style="left:1264.9px;top:1010.5px;font-size:18px;line-height:23px;color:#222;">25</div>
<div style="left:1325.2px;top:1011.6px;font-size:17px;line-height:22px;color:#3f6bf2;"><span class="md">重置</span></div>
<svg class="ab" style="left:0;top:1040px;width:1400px;height:550px" viewBox="0 520 700 275" font-family="Liberation Sans, sans-serif"><rect x="46.5" y="531" width="634.8" height="19.2" fill="#dc5f6b"/><text x="363.8" y="543.8" font-size="6.6" fill="#fff" text-anchor="middle" textLength="17.5">label1</text><path d="M46.5 567.3V738.7M681.3 738.7V567.3" fill="none" stroke="#9da1b3" stroke-width="0.7"/><path d="M46.5 738.7H681.3" fill="none" stroke="#75777f" stroke-width="0.55"/><path d="M42 738.7H46.5" stroke="#75777f" stroke-width="0.6"/><text x="38" y="741.7" font-size="8.5" fill="#444" text-anchor="end" textLength="4.3">0</text><path d="M42 723.61H46.5" stroke="#75777f" stroke-width="0.6"/><text x="38" y="726.61" font-size="8.5" fill="#444" text-anchor="end" textLength="8.6">14</text><path d="M42 707.44H46.5" stroke="#75777f" stroke-width="0.6"/><text x="38" y="710.44" font-size="8.5" fill="#444" text-anchor="end" textLength="8.6">29</text><path d="M42 692.35H46.5" stroke="#75777f" stroke-width="0.6"/><text x="38" y="695.35" font-size="8.5" fill="#444" text-anchor="end" textLength="8.6">43</text><path d="M42 676.18H46.5" stroke="#75777f" stroke-width="0.6"/><text x="38" y="679.18" font-size="8.5" fill="#444" text-anchor="end" textLength="8.6">58</text><path d="M42 661.08H46.5" stroke="#75777f" stroke-width="0.6"/><text x="38" y="664.08" font-size="8.5" fill="#444" text-anchor="end" textLength="8.6">72</text><path d="M42 644.92H46.5" stroke="#75777f" stroke-width="0.6"/><text x="38" y="647.92" font-size="8.5" fill="#444" text-anchor="end" textLength="8.6">87</text><path d="M42 629.82H46.5" stroke="#75777f" stroke-width="0.6"/><text x="38" y="632.82" font-size="8.5" fill="#444" text-anchor="end" textLength="12.9">101</text><path d="M42 613.65H46.5" stroke="#75777f" stroke-width="0.6"/><text x="38" y="616.65" font-size="8.5" fill="#444" text-anchor="end" textLength="12.9">116</text><path d="M42 598.56H46.5" stroke="#75777f" stroke-width="0.6"/><text x="38" y="601.56" font-size="8.5" fill="#444" text-anchor="end" textLength="12.9">130</text><path d="M42 582.39H46.5" stroke="#75777f" stroke-width="0.6"/><text x="38" y="585.39" font-size="8.5" fill="#444" text-anchor="end" textLength="12.9">145</text><path d="M42 567.3H46.5" stroke="#75777f" stroke-width="0.6"/><text x="38" y="570.3" font-size="8.5" fill="#444" text-anchor="end" textLength="12.9">159</text><path d="M681.3 567.3h4" stroke="#75777f" stroke-width="0.6"/><text x="688.4" y="570.3" font-size="8.5" fill="#444">2</text><path d="M681.3 653h4" stroke="#75777f" stroke-width="0.6"/><text x="688.4" y="656" font-size="8.5" fill="#444">1</text><path d="M681.3 738.7h4" stroke="#75777f" stroke-width="0.6"/><text x="688.4" y="741.7" font-size="8.5" fill="#444">0</text><text transform="translate(16.5 661.3) rotate(-90)" font-size="8.2" font-weight="bold" fill="#1c1c1c" text-anchor="middle" textLength="15">FPS</text><path d="M46.5 738.7v4.2" stroke="#75777f" stroke-width="0.6"/><text x="46.5" y="753.4" font-size="8.6" fill="#444" textLength="21.2">00:00</text><path d="M78.5 738.7v4.2" stroke="#75777f" stroke-width="0.6"/><text x="67.9" y="753.4" font-size="8.6" fill="#444" textLength="21.4">01:00</text><path d="M110.5 738.7v4.2" stroke="#75777f" stroke-width="0.6"/><text x="99.9" y="753.4" font-size="8.6" fill="#444" textLength="21.4">02:00</text><path d="M142.5 738.7v4.2" stroke="#75777f" stroke-width="0.6"/><text x="131.9" y="753.4" font-size="8.6" fill="#444" textLength="21.4">03:00</text><path d="M174.5 738.7v4.2" stroke="#75777f" stroke-width="0.6"/><text x="163.9" y="753.4" font-size="8.6" fill="#444" textLength="21.4">04:00</text><path d="M206.5 738.7v4.2" stroke="#75777f" stroke-width="0.6"/><text x="195.9" y="753.4" font-size="8.6" fill="#444" textLength="21.4">05:00</text><path d="M238.5 738.7v4.2" stroke="#75777f" stroke-width="0.6"/><text x="227.9" y="753.4" font-size="8.6" fill="#444" textLength="21.4">06:00</text><path d="M270.5 738.7v4.2" stroke="#75777f" stroke-width="0.6"/><text x="259.9" y="753.4" font-size="8.6" fill="#444" textLength="21.4">07:00</text><path d="M302.5 738.7v4.2" stroke="#75777f" stroke-width="0.6"/><text x="291.9" y="753.4" font-size="8.6" fill="#444" textLength="21.4">08:00</text><path d="M334.5 738.7v4.2" stroke="#75777f" stroke-width="0.6"/><text x="323.9" y="753.4" font-size="8.6" fill="#444" textLength="21.4">09:00</text><path d="M366.5 738.7v4.2" stroke="#75777f" stroke-width="0.6"/><text x="355.9" y="753.4" font-size="8.6" fill="#444" textLength="21.4">10:00</text><path d="M398.5 738.7v4.2" stroke="#75777f" stroke-width="0.6"/><text x="387.9" y="753.4" font-size="8.6" fill="#444" textLength="21.4">11:00</text><path d="M430.5 738.7v4.2" stroke="#75777f" stroke-width="0.6"/><text x="419.9" y="753.4" font-size="8.6" fill="#444" textLength="21.4">12:00</text><path d="M462.5 738.7v4.2" stroke="#75777f" stroke-width="0.6"/><text x="451.9" y="753.4" font-size="8.6" fill="#444" textLength="21.4">13:00</text><path d="M494.5 738.7v4.2" stroke="#75777f" stroke-width="0.6"/><text x="483.9" y="753.4" font-size="8.6" fill="#444" textLength="21.4">14:00</text><path d="M526.5 738.7v4.2" stroke="#75777f" stroke-width="0.6"/><text x="515.9" y="753.4" font-size="8.6" fill="#444" textLength="21.4">15:00</text><path d="M558.5 738.7v4.2" stroke="#75777f" stroke-width="0.6"/><text x="547.9" y="753.4" font-size="8.6" fill="#444" textLength="21.4">16:00</text><path d="M590.5 738.7v4.2" stroke="#75777f" stroke-width="0.6"/><text x="579.9" y="753.4" font-size="8.6" fill="#444" textLength="21.4">17:00</text><path d="M622.5 738.7v4.2" stroke="#75777f" stroke-width="0.6"/><text x="611.9" y="753.4" font-size="8.6" fill="#444" textLength="21.4">18:00</text><path d="M654.5 738.7v4.2" stroke="#75777f" stroke-width="0.6"/><text x="643.9" y="753.4" font-size="8.6" fill="#444" textLength="21.4">19:00</text><polyline fill="none" stroke="#44a5a8" stroke-width="0.75" points="46.5,733.5 58,729.6 71.5,725 98,718.2 124.5,712.4 150,708.2 178,704.6 208,701.3 238,698.6 270,696.2 302,694 334,692.3 358,691.3 395,689.8 430,688.5 476,687 523,685.6 570,684.5 620,683.5 681.3,682.5"/><path d="M48.9 738.7v-2.8M50.3 738.7v-0.5M51.9 738.7v-0.5M56.5 738.7v-0.8M59.4 738.7v-0.8M62.7 738.7v-2.2M64.3 738.7v-2.8M67.8 738.7v-2.2M70.5 738.7v-0.5M71.8 738.7v-0.5M74.1 738.7v-0.8M77.5 738.7v-0.5M81.3 738.7v-2.2M84.9 738.7v-2.2M88.8 738.7v-0.5M92.4 738.7v-2.2M95.2 738.7v-2.2M99.9 738.7v-1M104.1 738.7v-0.5M106.3 738.7v-0.5M109.5 738.7v-0.5M113.4 738.7v-0.8M115.1 738.7v-1.4M116.9 738.7v-0.8M121.7 738.7v-2.2M125.1 738.7v-0.5M127.5 738.7v-0.5M130.9 738.7v-0.5M133.9 738.7v-0.5M138.7 738.7v-2.8M140.1 738.7v-0.5M142.5 738.7v-0.5M146.3 738.7v-2.8M148.9 738.7v-0.5M150.2 738.7v-1M153.8 738.7v-1M157.9 738.7v-1M160.6 738.7v-0.5M163.7 738.7v-1.8M167 738.7v-0.5M171.3 738.7v-0.5M173.5 738.7v-1.4M177.3 738.7v-1M179.1 738.7v-1M182.8 738.7v-2.2M184.7 738.7v-1M187.5 738.7v-2.2M189.9 738.7v-2.2M194.7 738.7v-0.5M198.7 738.7v-2.8M203 738.7v-1.8M205.6 738.7v-1.8M207.1 738.7v-1M210 738.7v-2.2M211.4 738.7v-1M214.6 738.7v-0.5M218.1 738.7v-1M221.7 738.7v-1.4M226.5 738.7v-0.5M229.5 738.7v-1.8M234.5 738.7v-1.8M236.9 738.7v-2.8M239.4 738.7v-2.8M241.2 738.7v-2.2M243.7 738.7v-0.5M248.4 738.7v-0.5M250.8 738.7v-0.5M252.3 738.7v-0.5M255.5 738.7v-0.5M258 738.7v-2.2M262.2 738.7v-1M265.7 738.7v-0.5M269.8 738.7v-1M274.1 738.7v-0.5M276.2 738.7v-1.4M280.1 738.7v-0.5M284.3 738.7v-1M288.2 738.7v-0.5M291.1 738.7v-0.5M296 738.7v-0.5M298.6 738.7v-1M301.6 738.7v-1.8M305.2 738.7v-0.5M309.6 738.7v-2.8M312.1 738.7v-0.5M316.4 738.7v-1.8M320.6 738.7v-0.5M323.6 738.7v-2.8M326.1 738.7v-0.5M331 738.7v-1.8M335 738.7v-1M336.9 738.7v-1M340.3 738.7v-2.8M342.1 738.7v-0.5M347 738.7v-0.5M349.5 738.7v-1M350.8 738.7v-0.5M354.8 738.7v-2.8M359.5 738.7v-1M363.8 738.7v-1.4M365.9 738.7v-2.2M368.3 738.7v-1M369.7 738.7v-0.5M374.3 738.7v-0.5M378.6 738.7v-2.2M380.3 738.7v-2.2M381.6 738.7v-1M385.1 738.7v-0.5M386.9 738.7v-2.2M390.8 738.7v-0.5M393.3 738.7v-2.2M396.3 738.7v-0.5M400.9 738.7v-1M403.1 738.7v-0.5M406.3 738.7v-0.5M410.3 738.7v-0.5M413.2 738.7v-0.5M416.3 738.7v-2.8M418.6 738.7v-1.8M421.7 738.7v-2.2M426.3 738.7v-0.5M428.4 738.7v-0.5M433.2 738.7v-0.5M434.9 738.7v-1.8M437.4 738.7v-0.5M440.2 738.7v-1.4M444.4 738.7v-0.5M446.1 738.7v-0.5M449.9 738.7v-1M454.7 738.7v-0.8M457.4 738.7v-2.8M461.8 738.7v-1.8M466.8 738.7v-1.8M468.7 738.7v-2.8M471.3 738.7v-1.8M474.2 738.7v-1.4M477.4 738.7v-0.8M479 738.7v-0.5M481.1 738.7v-0.5M482.6 738.7v-1M484.8 738.7v-1.8M489.2 738.7v-0.5M494 738.7v-2.2M498.7 738.7v-0.5M502.6 738.7v-0.8M506.8 738.7v-0.8M509 738.7v-0.8M513.3 738.7v-1M514.7 738.7v-0.5M517.7 738.7v-2.2M520.5 738.7v-0.5M524 738.7v-2.8M526.1 738.7v-1M528.3 738.7v-1.4M531.9 738.7v-1M534.2 738.7v-1M536.4 738.7v-0.5M541.4 738.7v-0.8M545.4 738.7v-0.5M547.3 738.7v-1.8M548.9 738.7v-0.5M551.8 738.7v-1.8M556.7 738.7v-1M561.6 738.7v-2.8M565.6 738.7v-1.4M570.5 738.7v-0.5M571.7 738.7v-0.5M576.3 738.7v-0.8M577.8 738.7v-0.5M582.3 738.7v-0.5M584.6 738.7v-1.4M586 738.7v-1.4M588.9 738.7v-1.4M593.7 738.7v-1M595.1 738.7v-0.5M597.1 738.7v-1.4M599.8 738.7v-2.2M603.4 738.7v-0.8M605 738.7v-0.5M606.7 738.7v-0.5M609.4 738.7v-2.8M611.5 738.7v-0.5M614.7 738.7v-0.5M618.4 738.7v-0.5M623 738.7v-1.4M626.9 738.7v-1.4M630.9 738.7v-0.5M632.2 738.7v-0.5M636.8 738.7v-0.5M640.8 738.7v-0.5M642.5 738.7v-2.2M645.9 738.7v-0.5M647.2 738.7v-0.5M651.4 738.7v-0.5M656.2 738.7v-0.5M657.7 738.7v-2.8M660.3 738.7v-1.8M663.6 738.7v-0.5M667.2 738.7v-0.5M670.3 738.7v-0.8M674.3 738.7v-2.2M675.9 738.7v-2.8M679.9 738.7v-0.8M684.3 738.7v-1" stroke="#86a95c" stroke-width="0.8" fill="none"/><path d="M71.8 738.7V653.4" stroke="#4540d4" stroke-width="1" fill="none"/><path d="M70.8 738.7L71.8 712L72.8 738.7z" fill="#4038d2"/><path d="M124.8 738.7V653.4" stroke="#4540d4" stroke-width="1" fill="none"/><path d="M123.8 738.7L124.8 712L125.8 738.7z" fill="#4038d2"/><path d="M178.2 738.7V653.4" stroke="#4540d4" stroke-width="1" fill="none"/><path d="M177.2 738.7L178.2 712L179.2 738.7z" fill="#4038d2"/><path d="M358.6 738.7V653.4" stroke="#4540d4" stroke-width="1" fill="none"/><path d="M357.6 738.7L358.6 712L359.6 738.7z" fill="#4038d2"/><path d="M523.7 738.7V653.4" stroke="#4540d4" stroke-width="1" fill="none"/><path d="M522.7 738.7L523.7 712L524.7 738.7z" fill="#4038d2"/><path d="M46.5 738.5H681.3" stroke="#cd8448" stroke-width="1.4"/><path d="M46.5 738.2H681.3" stroke="#c4552f" stroke-width="0.4" opacity=".5"/><defs><marker id="mk" markerWidth="4" markerHeight="4" refX="2" refY="2" markerUnits="userSpaceOnUse"><circle cx="2" cy="2" r="1.4" fill="#b944b9"/></marker></defs><polyline fill="none" stroke="#b944b9" stroke-width="1" stroke-linejoin="round" marker-start="url(#mk)" marker-mid="url(#mk)" marker-end="url(#mk)" points="46.5,587.9 47,586.3 47.5,589 48,587.5 48.5,585.1 49,585.4 49.5,585 50,585.2 50.5,586.2 51,582.7 51.5,588.1 52,584.5 52.5,586.3 53,582.5 53.5,587.4 54,586.3 54.5,589.2 55,582.4 55.5,586.9 56,582.9 56.5,589.1 57,587.8 57.5,585.3 58,587.7 58.5,587 59,583.4 59.5,588.5 60,584.8 60.5,584.4 61,586.9 61.5,587.2 62,587.2 62.5,583 63,589.4 63.5,587.7 64,586.8 64.5,588.9 65,584.4 65.5,587.5 66,585 66.5,588.3 67,586.4 67.5,584.3 68,593.5 68.5,586.7 69,585.7 69.5,588.6 70,586.6 70.5,588.2 71,586.1 71.5,585.7 72,586.5 72.5,587.4 73,585.2 73.5,587.5 74,585.1 74.5,585.2 75,586 75.5,585.7 76,587 76.5,586.4 77,587.5 77.5,585.7 78,586.8 78.5,593.9 79,586.7 79.5,587.7 80,584.6 80.5,585.6 81,585 81.5,584.4 82,588.4 82.5,586.7 83,586.4 83.5,584.2 84,588.3 84.5,584.4 85,583.2 85.5,588.7 86,583.4 86.5,586.2 87,584.3 87.5,588.3 88,588.6 88.5,584.7 89,583.4 89.5,596.8 90,589.1 90.5,582.9 91,585.9 91.5,584.2 92,587.4 92.5,588.2 93,598.7 93.5,587.6 94,583.6 94.5,585.9 95,589.4 95.5,585 96,588.3 96.5,585 97,588 97.5,587 98,584.6 98.5,587.1 99,589.7 99.5,583.5 100,586.1 100.5,584.1 101,586.3 101.5,583.2 102,585.2 102.5,583.2 103,583.1 103.5,585.4 104,592.8 104.5,586.7 105,588.3 105.5,584.6 106,588.7 106.5,588.3 107,585 107.5,586.3 108,584.5 108.5,582.8 109,588.6 109.5,588.8 110,583.6 110.5,584.4 111,584.3 111.5,584.1 112,584.8 112.5,585.8 113,587.1 113.5,586.2 114,587.5 114.5,586.6 115,586.2 115.5,588.6 116,588.6 116.5,586.8 117,583.4 117.5,584.6 118,583.6 118.5,584.8 119,584.3 119.5,588.5 120,588.2 120.5,586.2 121,584.4 121.5,584.3 122,594.1 122.5,587.1 123,588 123.5,584 124,584.4 124.5,586 125,588 125.5,585.2 126,585.8 126.5,586.5 127,588.6 127.5,587.8 128,583.1 128.5,588 129,586.3 129.5,587.7 130,584.3 130.5,584.3 131,587.4 131.5,587.6 132,586.4 132.5,587.8 133,583.4 133.5,588.9 134,587.8 134.5,585 135,586.3 135.5,589.5 136,587.9 136.5,586.9 137,587.9 137.5,585.3 138,588.2 138.5,586 139,585.3 139.5,593 140,584.5 140.5,589.4 141,589.4 141.5,589.4 142,583 142.5,583.7 143,587 143.5,592.5 144,586.2 144.5,583.9 145,588.6 145.5,584.9 146,587.7 146.5,584.8 147,589.3 147.5,583.3 148,589.5 148.5,583.9 149,586.8 149.5,583 150,588.4 150.5,588.9 151,587 151.5,588.5 152,588.4 152.5,586.7 153,583.2 153.5,588.2 154,588.2 154.5,588.8 155,584.4 155.5,584.1 156,583.9 156.5,583.5 157,585.4 157.5,588.5 158,584.9 158.5,585.2 159,585.3 159.5,587.8 160,585.7 160.5,583.5 161,586.8 161.5,583.4 162,587.8 162.5,584.1 163,585.1 163.5,586.6 164,584.1 164.5,585.2 165,587.4 165.5,586.8 166,596.5 166.5,586.6 167,584.7 167.5,585.2 168,590 168.5,589.1 169,589.3 169.5,593.1 170,589 170.5,590.9 171,591 171.5,591.4 172,594.5 172.5,589.9 173,591.9 173.5,586.1 174,585.7 174.5,585.9 175,588.6 175.5,586.6 176,589.8 176.5,587.9 177,593.1 177.5,590.8 178,588.1 178.5,588.1 179,587.1 179.5,587.7 180,586.9 180.5,587.7 181,589.2 181.5,582.8 182,585.9 182.5,583.2 183,585.8 183.5,584.3 184,587 184.5,588.6 185,589.1 185.5,585.2 186,587.5 186.5,587.4 187,583.3 187.5,583.2 188,584.2 188.5,587.6 189,586.7 189.5,589.3 190,585.2 190.5,589.3 191,587.5 191.5,585.8 192,587.5 192.5,587 193,593.6 193.5,584.6 194,589.1 194.5,584.9 195,583.9 195.5,589 196,583.4 196.5,585.5 197,585.9 197.5,594.5 198,588.1 198.5,583.4 199,585.3 199.5,587.9 200,585.9 200.5,585.1 201,585.4 201.5,588.7 202,583.1 202.5,586.2 203,586.8 203.5,583.6 204,585.1 204.5,583.2 205,585.2 205.4,583.8 205.9,583.5 206.4,588.5 206.9,585 207.4,583.7 207.9,587.2 208.4,583.8 208.9,586 209.4,583.8 209.9,587.7 210.4,583.7 210.9,586.7 211.4,586.7 211.9,583.6 212.4,584.1 212.9,586.2 213.4,594.2 213.9,587.6 214.4,584.3 214.9,585.5 215.4,591 215.9,585.3 216.4,583.2 216.9,588.9 217.4,585.2 217.9,588.7 218.4,583.8 218.9,587.9 219.4,585.8 219.9,583.6 220.4,584.7 220.9,587.7 221.4,589.1 221.9,583.3 222.4,588.8 222.9,585.1 223.4,588.6 223.9,585 224.4,587.2 224.9,587.1 225.4,589.2 225.9,583.1 226.4,585.3 226.9,587.6 227.4,592.5 227.9,589 228.4,589.3 228.9,584.5 229.4,585.5 229.9,586.5 230.4,587.6 230.9,589.3 231.4,589 231.9,583.7 232.4,585.4 232.9,585.9 233.4,588.5 233.9,582.9 234.4,588.5 234.9,584.1 235.4,582.5 235.9,588.9 236.4,588.9 236.9,583.3 237.4,586.6 237.9,586.9 238.4,586.5 238.9,588.3 239.4,585.2 239.9,588.5 240.4,584.8 240.9,589.1 241.4,585.9 241.9,586.4 242.4,587.2 242.9,584.8 243.4,587.7 243.9,585.2 244.4,586 244.9,584.5 245.4,585.3 245.9,583.2 246.4,585.4 246.9,587.6 247.4,587.4 247.9,583.2 248.4,585.1 248.9,588 249.4,587.2 249.9,587.3 250.4,583.7 250.9,583.9 251.4,588.8 251.9,586.4 252.4,583.4 252.9,588.7 253.4,598 253.9,584.9 254.4,585.2 254.9,585.1 255.4,583.9 255.9,585.6 256.4,587.8 256.9,586.4 257.4,584.9 257.9,587.5 258.4,584.8 258.9,584 259.4,588.9 259.9,585.9 260.4,583.8 260.9,593.7 261.4,583.5 261.9,587.6 262.4,584.7 262.9,587.9 263.4,583.8 263.9,587.9 264.4,589.2 264.9,586.9 265.4,584.4 265.9,582.8 266.4,586 266.9,584.5 267.4,585.1 267.9,586.9 268.4,589 268.9,585.1 269.4,585.5 269.9,587.5 270.4,582.8 270.9,582.5 271.4,586.3 271.9,582.9 272.4,583.9 272.9,585 273.4,583.8 273.9,584.8 274.4,583.9 274.9,582.4 275.4,585 275.9,586.3 276.4,588 276.9,584.7 277.4,584.8 277.9,583.8 278.4,587.1 278.9,587.3 279.4,585.2 279.9,583.2 280.4,587.4 280.9,589 281.4,587.3 281.9,585.8 282.4,585.5 282.9,588 283.4,587.4 283.9,585.5 284.4,588.1 284.9,584.2 285.4,586.7 285.9,585.3 286.4,583 286.9,583.5 287.4,585.2 287.9,586.1 288.4,588.6 288.9,585 289.4,588.3 289.9,584.1 290.4,585.7 290.9,583.7 291.4,587.5 291.9,585.5 292.4,588 292.9,584.9 293.4,587.2 293.9,586.5 294.4,585 294.9,586.8 295.4,588.7 295.9,584.7 296.4,584.3 296.9,586.1 297.4,588 297.9,586.5 298.4,588.3 298.9,586.9 299.4,585.7 299.9,587.3 300.4,587.4 300.9,587.2 301.4,586.1 301.9,583.2 302.4,586.9 302.9,586.1 303.4,587.9 303.9,588.3 304.4,588.5 304.9,586.7 305.4,586.6 305.9,586.7 306.4,588.9 306.9,586.2 307.4,588.9 307.9,585.8 308.4,588.3 308.9,584.8 309.4,588.8 309.9,585.2 310.4,588.3 310.9,583.5 311.4,588.8 311.9,589.4 312.4,588.6 312.9,584.6 313.4,590.7 313.9,585.6 314.4,583.1 314.9,585.9 315.4,584.1 315.9,584.6 316.4,589.2 316.9,585.4 317.4,584.9 317.9,584.1 318.4,589.1 318.9,583.2 319.4,593.1 319.9,582.5 320.4,588.1 320.9,586.3 321.4,585.6 321.9,584.3 322.4,587 322.9,584.7 323.4,584.2 323.9,585.7 324.4,584.9 324.9,583.3 325.4,589.5 325.9,583.8 326.4,585.9 326.9,588.3 327.4,584.5 327.9,587.6 328.4,586.1 328.9,590.2 329.4,587.9 329.9,588.8 330.4,590.3 330.9,590.7 331.4,593.8 331.9,593 332.4,590.5 332.9,588.5 333.4,587.2 333.9,591.5 334.4,585.8 334.9,584.4 335.4,587.4 335.9,584.9 336.4,586.6 336.9,587.2 337.4,588 337.9,584.6 338.4,587.2 338.9,583.8 339.4,588 339.9,584.4 340.4,584.5 340.9,585.8 341.4,586.1 341.9,584.4 342.4,583.3 342.9,588.5 343.4,584.9 343.9,592 344.4,585.8 344.9,586.9 345.4,586.6 345.9,587.4 346.4,587.1 346.9,588 347.4,589.4 347.9,589.6 348.4,591.1 348.9,589.2 349.4,588.3 349.9,586.8 350.4,587.6 350.9,592.1 351.4,585.5 351.9,588 352.4,585.6 352.9,587.9 353.4,587.5 353.9,586.4 354.4,585.3 354.9,583.7 355.4,582.6 355.9,592 356.4,584.6 356.9,583.6 357.4,583.5 357.9,583 358.4,589 358.9,588 359.4,583 359.9,588.4 360.4,587 360.9,584.4 361.4,582.8 361.9,589.3 362.4,589.5 362.9,587.8 363.4,584.3 363.9,586.2 364.4,597.6 364.9,585.4 365.4,584.9 365.9,587 366.4,587 366.9,586.5 367.4,583.1 367.9,586.3 368.4,583.9 368.9,583.7 369.4,585.2 369.9,584.3 370.4,582.9 370.9,590.9 371.4,583.1 371.9,588.6 372.4,588.7 372.9,587.6 373.4,590.9 373.9,591.8 374.4,591.6 374.9,592.8 375.4,589.6 375.9,588.6 376.4,586.7 376.9,588.3 377.4,585.3 377.9,583.5 378.4,584.1 378.9,584.5 379.4,586.4 379.9,587.5 380.4,586.7 380.9,588 381.4,583.3 381.9,585.2 382.4,586 382.9,586.4 383.4,583.6 383.9,586.8 384.4,586.5 384.9,587.8 385.4,585.9 385.9,587.8 386.4,584.2 386.9,584.7 387.4,587.9 387.9,585.1 388.4,587.8 388.9,588.8 389.4,585.9 389.9,583.6 390.4,586.9 390.9,585.2 391.4,588.5 391.9,584.5 392.4,585 392.9,585.7 393.4,588.9 393.9,585.6 394.4,586.9 394.9,583.1 395.4,587 395.9,583.9 396.4,584.2 396.9,585.5 397.4,587.4 397.9,584.5 398.4,589.3 398.9,588.5 399.4,588.9 399.9,588.5 400.4,586.4 400.9,591.3 401.4,587.7 401.9,587.9 402.4,590.2 402.9,589 403.4,590.1 403.9,588.1 404.4,585.5 404.9,588.9 405.4,583.2 405.9,588.1 406.4,584.8 406.9,586.8 407.4,589.6 407.9,584.6 408.4,585.3 408.9,582.6 409.4,587.1 409.9,583.6 410.4,583.6 410.9,582.6 411.4,586.8 411.9,587.3 412.4,584.8 412.9,583.5 413.4,589.5 413.9,588.2 414.4,588.1 414.9,587.9 415.4,586.7 415.9,586.4 416.4,582.9 416.9,589.1 417.4,585.3 417.9,585.2 418.4,584.1 418.9,588.6 419.4,589.1 419.9,588.9 420.4,587 420.9,588.7 421.4,583.5 421.9,588.5 422.4,583.5 422.9,586 423.4,583.6 423.9,587.3 424.4,584.7 424.9,586.3 425.4,587.6 425.9,585.8 426.4,583.8 426.9,586.2 427.4,588.7 427.9,587.8 428.4,583.4 428.9,583.7 429.4,583.5 429.9,587 430.4,583.9 430.9,592.7 431.4,585.4 431.9,585.1 432.4,584.1 432.9,584.5 433.4,583.2 433.9,583.5 434.4,585.1 434.9,587.8 435.4,587.4 435.9,588.5 436.4,583.5 436.9,587.4 437.4,585.2 437.9,586.6 438.4,586.6 438.9,588.5 439.4,582.9 439.9,583.8 440.4,585.3 440.9,583.7 441.4,587.5 441.9,587 442.4,585.4 442.9,589.4 443.4,582.7 443.9,587.4 444.4,583.9 444.9,586.9 445.4,583.8 445.9,582.7 446.4,587.9 446.9,582.7 447.4,591.6 447.9,583.2 448.4,585.8 448.9,585.2 449.4,583.7 449.9,586.6 450.4,589.4 450.9,590.8 451.4,588 451.9,586.1 452.4,582.9 452.9,588.3 453.4,586.8 453.9,583.2 454.4,584.7 454.9,589 455.4,587 455.9,587.4 456.4,585 456.9,587.2 457.4,586 457.9,585.1 458.4,583.9 458.9,583.4 459.4,589 459.9,588.7 460.4,585.2 460.9,590.6 461.4,584.7 461.9,583.4 462.4,590.7 462.9,588.1 463.4,585.6 463.9,583.6 464.4,588.2 464.9,585.4 465.4,585.9 465.9,588.8 466.4,583.4 466.9,586.2 467.4,584.3 467.9,585 468.4,588.1 468.9,593 469.4,584 469.9,588.5 470.4,591.4 470.9,586.6 471.4,588.6 471.9,587.5 472.4,587.9 472.9,593.9 473.4,586.3 473.9,587.4 474.4,583.3 474.9,585 475.4,585.6 475.9,586.6 476.4,588.7 476.9,588.4 477.4,593.9 477.9,586.6 478.4,587 478.9,587 479.4,583.3 479.9,583.6 480.4,586.7 480.9,587 481.4,593.6 481.9,587.6 482.4,587.9 482.9,584.2 483.4,586.3 483.9,587.7 484.4,587.9 484.9,585.2 485.4,587.4 485.9,588 486.4,584.9 486.9,582.7 487.4,586.5 487.9,585.8 488.4,586 488.9,584.3 489.4,588.9 489.9,584.4 490.4,589.4 490.9,593.3 491.4,584.6 491.9,588 492.4,583.2 492.9,583 493.4,584.2 493.9,584.5 494.4,587.6 494.9,586.8 495.4,583.5 495.9,585.1 496.4,583.4 496.9,588.4 497.4,583.9 497.9,593.2 498.4,586.3 498.9,586.8 499.4,588.9 499.9,587.7 500.4,588 500.9,586.7 501.4,586.5 501.9,588.4 502.4,585.7 502.9,583 503.4,587.9 503.9,585.9 504.4,584.9 504.9,583.2 505.4,584.3 505.9,583.5 506.4,585.5 506.9,583 507.4,588.9 507.9,584.3 508.4,583.5 508.9,584.6 509.4,585.3 509.9,585.9 510.4,583.4 510.9,587 511.4,584.9 511.9,585.3 512.4,585 512.9,585 513.4,584.5 513.9,587.8 514.4,584.2 514.9,587.9 515.4,584.5 515.9,587.4 516.4,587.9 516.9,588.3 517.4,588.1 517.9,586.1 518.4,594.9 518.9,585.2 519.4,588.1 519.9,585.5 520.4,585.3 520.9,586.5 521.4,585 521.9,583.3 522.4,586.6 522.8,592.4 523.3,588.7 523.8,587.2 524.3,587.2 524.8,588.1 525.3,585.6 525.8,585.7 526.3,586.2 526.8,586.1 527.3,587.1 527.8,587.6 528.3,583.1 528.8,584.2 529.3,587 529.8,587.5 530.3,584.5 530.8,585 531.3,592.1 531.8,588.5 532.3,582.8 532.8,583.3 533.3,588.9 533.8,587.4 534.3,586.9 534.8,587.1 535.3,588.7 535.8,583.6 536.3,589.3 536.8,583.8 537.3,582.4 537.8,589.3 538.3,586.6 538.8,582.4 539.3,585.1 539.8,588.1 540.3,585.1 540.8,582.6 541.3,586.2 541.8,592.9 542.3,583.6 542.8,588.6 543.3,589.2 543.8,583.3 544.3,589.5 544.8,588.3 545.3,597.3 545.8,585.6 546.3,585.8 546.8,586.5 547.3,585.2 547.8,586.7 548.3,588.8 548.8,584.6 549.3,585 549.8,586.6 550.3,585 550.8,583.7 551.3,585.2 551.8,587.8 552.3,584.9 552.8,585.6 553.3,583.4 553.8,587.6 554.3,587.4 554.8,583.3 555.3,584.6 555.8,584.1 556.3,587.8 556.8,584.8 557.3,586.3 557.8,584.9 558.3,583.7 558.8,584.1 559.3,584.4 559.8,586 560.3,584.1 560.8,585.3 561.3,585.9 561.8,585 562.3,583.4 562.8,586.2 563.3,586.7 563.8,586.6 564.3,588.6 564.8,583.4 565.3,588.2 565.8,583.7 566.3,583.2 566.8,588.3 567.3,586.9 567.8,584 568.3,591.5 568.8,587.6 569.3,585.9 569.8,586.1 570.3,587 570.8,587.1 571.3,589 571.8,587.7 572.3,594.3 572.8,586.4 573.3,586.1 573.8,587.7 574.3,583.1 574.8,584.9 575.3,585.4 575.8,582.6 576.3,587.7 576.8,589.4 577.3,586.1 577.8,589.4 578.3,589.1 578.8,585 579.3,583.6 579.8,584.7 580.3,588 580.8,585.9 581.3,585.9 581.8,588.8 582.3,588.2 582.8,584.4 583.3,586.3 583.8,587.4 584.3,586.2 584.8,587.9 585.3,585.3 585.8,584.4 586.3,586.9 586.8,582.5 587.3,585.5 587.8,588.6 588.3,583.1 588.8,588.9 589.3,586.6 589.8,588.8 590.3,584 590.8,584 591.3,588.9 591.8,587.1 592.3,583.7 592.8,583.6 593.3,587.1 593.8,584.9 594.3,584.2 594.8,583.6 595.3,582.9 595.8,587.9 596.3,585 596.8,586.7 597.3,583.5 597.8,588.2 598.3,587.6 598.8,585.2 599.3,588.7 599.8,583.9 600.3,587.6 600.8,586.8 601.3,585.8 601.8,584.7 602.3,588.4 602.8,585.5 603.3,586.7 603.8,593.2 604.3,589 604.8,590.2 605.3,591.4 605.8,591.7 606.3,591.8 606.8,587.4 607.3,600 607.8,591.4 608.3,591 608.8,594.4 609.3,587 609.8,589.2 610.3,585.3 610.8,586.1 611.3,583.7 611.8,583.8 612.3,589.2 612.8,585.3 613.3,586.7 613.8,584 614.3,589.1 614.8,585.9 615.3,587 615.8,587.1 616.3,583.7 616.8,582.9 617.3,587.8 617.8,583.9 618.3,589.2 618.8,585 619.3,584.6 619.8,587 620.3,587.6 620.8,585.6 621.3,583.9 621.8,588.5 622.3,586.8 622.8,582.9 623.3,588.8 623.8,588.2 624.3,587.8 624.8,584.3 625.3,583.3 625.8,584 626.3,587.2 626.8,586.5 627.3,588.2 627.8,583.1 628.3,588.2 628.8,589.5 629.3,589.6 629.8,583.1 630.3,587.1 630.8,586.9 631.3,586.9 631.8,590.7 632.3,584.6 632.8,587.1 633.3,586.6 633.8,583.4 634.3,582.7 634.8,586.2 635.3,584.2 635.8,588.5 636.3,595.4 636.8,587.2 637.3,583.1 637.8,588.9 638.3,583.8 638.8,588.9 639.3,586.4 639.8,588.3 640.3,584.9 640.8,588.2 641.3,588.2 641.8,586 642.3,584.5 642.8,586.6 643.3,585.2 643.8,586.6 644.3,583.8 644.8,587.7 645.3,588.8 645.8,585.5 646.3,584.9 646.8,588.6 647.3,588.5 647.8,583.5 648.3,596.7 648.8,585.3 649.3,583.3 649.8,584.1 650.3,588.4 650.8,584.1 651.3,587.6 651.8,591.6 652.3,583.4 652.8,588.6 653.3,583.4 653.8,587 654.3,586.3 654.8,587 655.3,583.1 655.8,587.4 656.3,585.8 656.8,588.2 657.3,583.7 657.8,583.6 658.3,587.7 658.8,582.9 659.3,584.6 659.8,583.9 660.3,588.7 660.8,589.1 661.3,586.7 661.8,584.8 662.3,584.9 662.8,585.5 663.3,585 663.8,587.1 664.3,586.9 664.8,584 665.3,587.1 665.8,582.7 666.3,584.9 666.8,589.2 667.3,584.9 667.8,584.2 668.3,583.7 668.8,587.3 669.3,585.8 669.8,589.6 670.3,587.5 670.8,589.2 671.3,585.7 671.8,586.1 672.3,584.4 672.8,586.9 673.3,589.7 673.8,586.2 674.3,589.9 674.8,590.4 675.3,588.5 675.8,591.2 676.3,591.4 676.8,590.1 677.3,588.5 677.8,591.4 678.3,592.2 678.8,588.4 679.3,587.1 679.8,585.6 680.3,598.1 680.8,588.2 681.3,584"/><defs><linearGradient id="sl" x1="0" y1="0" x2="0" y2="1"><stop offset="0" stop-color="#5aacf3"/><stop offset=".45" stop-color="#4099ee"/><stop offset="1" stop-color="#57aaf2"/></linearGradient></defs><rect x="46.5" y="761.9" width="634.8" height="9.6" rx="1.5" fill="url(#sl)"/><rect x="46.1" y="759.7" width="15.3" height="14" rx="2" fill="#e2e3ed" stroke="#9a9eac" stroke-width="0.7"/><path d="M51.9 763.7v6" stroke="#666a80" stroke-width="0.85"/><path d="M53.9 763.7v6" stroke="#666a80" stroke-width="0.85"/><path d="M55.9 763.7v6" stroke="#666a80" stroke-width="0.85"/><rect x="665.5" y="759.7" width="16.3" height="14" rx="2" fill="#e2e3ed" stroke="#9a9eac" stroke-width="0.7"/><path d="M670.5 763.7v6" stroke="#666a80" stroke-width="0.85"/><path d="M672.7 763.7v6" stroke="#666a80" stroke-width="0.85"/><path d="M674.9 763.7v6" stroke="#666a80" stroke-width="0.85"/><path d="M681.3 738.7v12.5" stroke="#9da1b3" stroke-width="0.6"/><path d="M110 783.7h9.6" stroke="#c04dc0" stroke-width="2.4" stroke-linecap="round"/><circle cx="114.8" cy="783.7" r="1.9" fill="#fff" stroke="#c04dc0" stroke-width="1.3"/><text x="126.39999999999999" y="786.6" font-size="8.4" fill="#3c3c3c">FPS</text><path d="M159.2 783.7h9.6" stroke="#5fb760" stroke-width="2.4" stroke-linecap="round"/><text x="175.6" y="786.6" font-size="8.4" fill="#3c3c3c" textLength="32.8">Smooth</text><path d="M224.7 783.7h9.6" stroke="#3ea3a6" stroke-width="2.4" stroke-linecap="round"/><text x="241.1" y="786.6" font-size="8.4" fill="#3c3c3c" textLength="49.3">1%Low(FPS)</text><path d="M307.2 783.7h9.6" stroke="#3a36d8" stroke-width="2.4" stroke-linecap="round"/><text x="323.6" y="786.6" font-size="8.4" fill="#3c3c3c" textLength="42.3">SmallJank</text><path d="M382.2 783.7h9.6" stroke="#e8833a" stroke-width="2.4" stroke-linecap="round"/><circle cx="387" cy="783.7" r="1.9" fill="#fff" stroke="#e8833a" stroke-width="1.3"/><text x="398.6" y="786.6" font-size="8.4" fill="#3c3c3c" textLength="18.8">Jank</text><path d="M434.2 783.7h9.6" stroke="#d8412f" stroke-width="2.4" stroke-linecap="round"/><circle cx="439" cy="783.7" r="1.9" fill="#fff" stroke="#d8412f" stroke-width="1.3"/><text x="451.1" y="786.6" font-size="8.4" fill="#3c3c3c" textLength="31.8">BigJank</text><path d="M499.7 783.7h9.6" stroke="#3f7fe8" stroke-width="2.4" stroke-linecap="round"/><text x="515.1" y="786.6" font-size="8.4" fill="#3c3c3c" textLength="28.8">Stutter</text><path d="M560.2 783.7h9.6" stroke="#5fd0d8" stroke-width="2.4" stroke-linecap="round"/><text x="577.1" y="786.6" font-size="8.4" fill="#3c3c3c" textLength="44.3">InterFrame</text></svg>
<div style="left:1251.2px;top:1557.8px;font-size:17px;line-height:22px;color:#3f6bf2;"><span class="md">全隐藏</span></div>
</div>
</body></html>
